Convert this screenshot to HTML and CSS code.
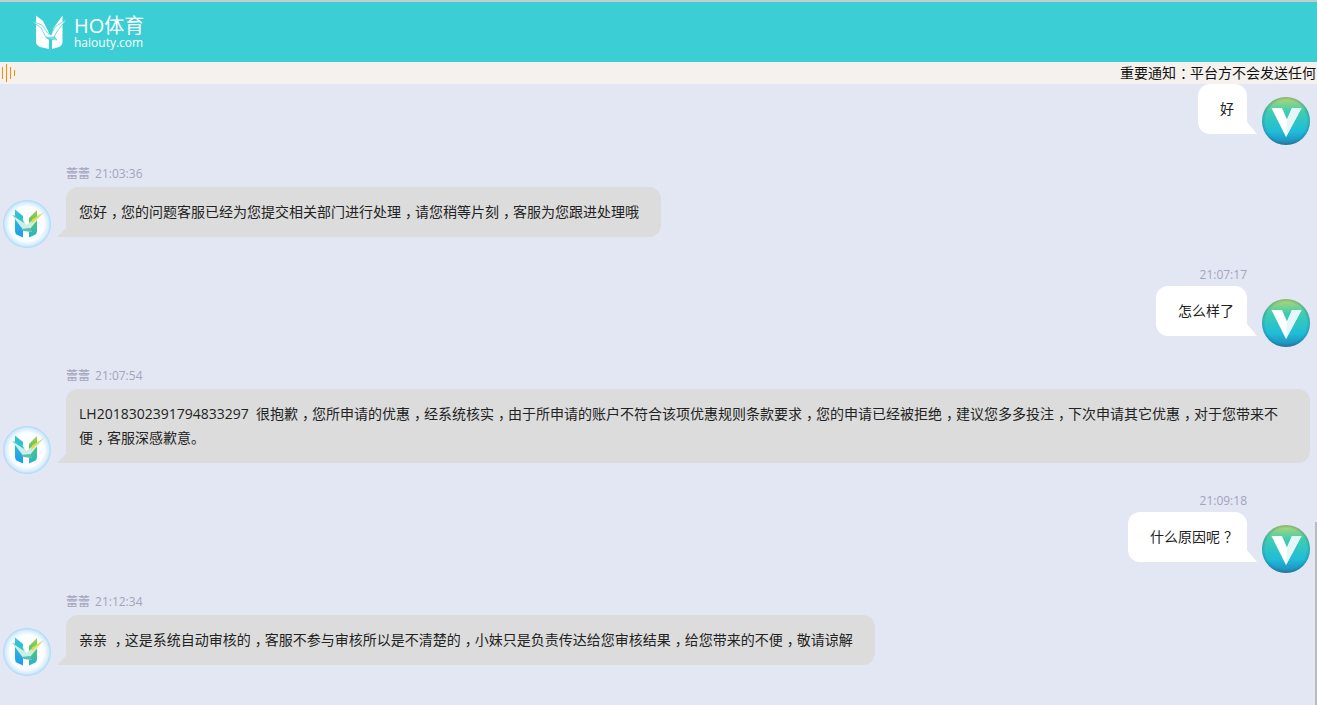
FILE: index.html
```html
<!DOCTYPE html>
<html lang="zh-CN">
<head>
<meta charset="utf-8">
<title>HO体育</title>
<link rel="stylesheet" href="styles.css">
</head>
<body>
<svg class="defs" width="0" height="0" aria-hidden="true">
  <defs>
    <linearGradient id="userFill" x1="0" y1="0" x2="0" y2="1">
      <stop offset="0" stop-color="#b9d86c"/>
      <stop offset=".3" stop-color="#3fcdb1"/>
      <stop offset=".72" stop-color="#20bcd8"/>
      <stop offset=".9" stop-color="#1e9ac6"/>
      <stop offset="1" stop-color="#2b7d9c"/>
    </linearGradient>
    <radialGradient id="userRim" cx=".5" cy=".5" r=".5">
      <stop offset=".86" stop-color="#1d5a78" stop-opacity="0"/>
      <stop offset="1" stop-color="#1d5a78" stop-opacity=".3"/>
    </radialGradient>
    <radialGradient id="orb" cx=".5" cy=".5" r=".5">
      <stop offset="0" stop-color="#fff"/>
      <stop offset=".72" stop-color="#fbfdff"/>
      <stop offset=".9" stop-color="#d6ecfb"/>
      <stop offset="1" stop-color="#a9d8f6"/>
    </radialGradient>
    <linearGradient id="mLeft" x1="0" y1="0" x2="0" y2="1">
      <stop offset="0" stop-color="#38c9d2"/>
      <stop offset="1" stop-color="#1c9bee"/>
    </linearGradient>
    <linearGradient id="mRight" x1="0" y1="1" x2="0" y2="0">
      <stop offset="0" stop-color="#27b4d0"/>
      <stop offset=".55" stop-color="#4fc27c"/>
      <stop offset="1" stop-color="#a8d23c"/>
    </linearGradient>
    <symbol id="avatarUser" viewBox="0 0 48 48">
      <circle cx="24" cy="24" r="24" fill="url(#userFill)"/>
      <circle cx="24" cy="24" r="24" fill="url(#userRim)"/>
      <path d="M9.500 11H20L25 22.500L30 11H39.500L24 40Z" fill="#fff"/>
      <path d="M25 22.500L30 11H39.500L24 40Z" fill="#e4f7f8"/>
    </symbol>
    <symbol id="avatarAgent" viewBox="0 0 48 48">
      <circle cx="24" cy="24" r="24" fill="url(#orb)"/>
      <path d="M35 38A17 17 0 0 0 43 26A21 21 0 0 1 35 38Z" fill="#f3e9b8"/>
      <path d="M12 9.500L20 16V37.500L14.500 35Q12 34 12 31Z" fill="url(#mLeft)"/>
      <path d="M34 10L26 18V37.500L31.500 35Q34 34 34 31Z" fill="url(#mRight)"/>
      <path d="M9 15L20 19L23.500 25L27 22L41 12L31 24L27 29L29 32L21 31L18 27Z" fill="#cdeee4"/>
      <path d="M9 15L19 18L21 23Z" fill="#2ac4cc"/>
      <path d="M41 12L29 19.500L28 24Z" fill="#e4da32"/>
      <path d="M18 29L27 28L29 32L21 31Z" fill="#58bfb4"/>
    </symbol>
  </defs>
</svg>

<header class="topbar">
  <div class="brand">
    <svg class="brand-mark" viewBox="0 0 35 36" aria-hidden="true">
      <path d="M4 1.500L11 7L17 19V35L8 33Q4 31 4 28Z" fill="#fff"/>
      <path d="M30.500 1.500L21.500 14L20 19V35L27 33Q30.500 31 30.500 28Z" fill="#fff"/>
      <path d="M0 7L10 11L15.500 19L19 21L23 13L35 5L26 16L22 23L25 26L16 25L13 21.500L9 14Z" fill="#fff" stroke="#3bced5" stroke-width=".7"/>
      <path d="M13 23L23 22.500L24 25L16 25.500Z" fill="#3bced5" opacity=".7"/>
      <path d="M17 26L20 26V36H17Z" fill="#3bced5"/>
    </svg>
    <div class="brand-text">
      <div class="brand-name">HO体育</div>
      <div class="brand-url">haiouty.com</div>
    </div>
  </div>
</header>

<div class="notice">
  <svg class="notice-icon" viewBox="0 0 16 18" aria-hidden="true">
    <path d="M2.500 3V15M6.500 0V18M10.500 3V15M14.500 6V12" stroke="#ff8a00" stroke-width="1" fill="none"/>
  </svg>
  <div class="notice-text">重要通知<span class="pn">：</span>平台方不会发送任何</div>
</div>

<main class="chat">
  <article class="msg msg-user msg-first">
    <div class="body"><div class="bubble">好</div></div>
    <svg class="avatar"><use href="#avatarUser"/></svg>
  </article>

  <article class="msg msg-agent">
    <svg class="avatar"><use href="#avatarAgent"/></svg>
    <div class="body">
      <div class="meta"><span>蕾蕾</span><span>21:03:36</span></div>
      <div class="bubble">您好<span class="pn">，</span>您的问题客服已经为您提交相关部门进行处理<span class="pn">，</span>请您稍等片刻<span class="pn">，</span>客服为您跟进处理哦</div>
    </div>
  </article>

  <article class="msg msg-user">
    <div class="body">
      <div class="meta"><span>21:07:17</span></div>
      <div class="bubble">怎么样了</div>
    </div>
    <svg class="avatar"><use href="#avatarUser"/></svg>
  </article>

  <article class="msg msg-agent">
    <svg class="avatar"><use href="#avatarAgent"/></svg>
    <div class="body">
      <div class="meta"><span>蕾蕾</span><span>21:07:54</span></div>
      <div class="bubble">LH2018302391794833297&nbsp;&nbsp;很抱歉<span class="pn">，</span>您所申请的优惠<span class="pn">，</span>经系统核实<span class="pn">，</span>由于所申请的账户不符合该项优惠规则条款要求<span class="pn">，</span>您的申请已经被拒绝<span class="pn">，</span>建议您多多投注<span class="pn">，</span>下次申请其它优惠<span class="pn">，</span>对于您带来不便<span class="pn">，</span>客服深感歉意。</div>
    </div>
  </article>

  <article class="msg msg-user">
    <div class="body">
      <div class="meta"><span>21:09:18</span></div>
      <div class="bubble">什么原因呢<span class="pn">？</span></div>
    </div>
    <svg class="avatar"><use href="#avatarUser"/></svg>
  </article>

  <article class="msg msg-agent">
    <svg class="avatar"><use href="#avatarAgent"/></svg>
    <div class="body">
      <div class="meta"><span>蕾蕾</span><span>21:12:34</span></div>
      <div class="bubble">亲亲 <span class="pn">，</span>这是系统自动审核的<span class="pn">，</span>客服不参与审核所以是不清楚的<span class="pn">，</span>小妹只是负责传达给您审核结果<span class="pn">，</span>给您带来的不便<span class="pn">，</span>敬请谅解</div>
    </div>
  </article>
</main>
<div class="scroll-thumb"></div>
</body>
</html>
```
FILE: styles.css
```css
* { box-sizing: border-box; }
html, body { margin: 0; height: 100%; }
body {
  width: 1317px;
  height: 705px;
  overflow: hidden;
  position: relative;
  display: flex;
  flex-direction: column;
  background: #e3e7f3;
  font-family: "Open Sans", "Noto Sans CJK SC", sans-serif;
  color: #222;
}
.defs { position: absolute; }

.topbar {
  height: 62px;
  flex: none;
  background: #3bced5;
  border-top: 2px solid #c6cccc;
  padding: 12px 0 0 32px;
}
.brand { display: flex; gap: 7px; }
.brand-mark { width: 35px; height: 36px; flex: none; }
.brand-text { color: #fff; }
.brand-name { font-size: 20px; line-height: 24px; }
.brand-url { font-size: 12px; line-height: 10px; }

.notice {
  height: 22px;
  flex: none;
  background: #f5f1ee;
  display: flex;
  align-items: center;
  overflow: hidden;
  position: relative;
}
.notice-icon { width: 16px; height: 18px; flex: none; }
.notice-text {
  margin-left: 1104px;
  font-size: 14px;
  line-height: 22px;
  white-space: nowrap;
  color: #111;
  flex: none;
}
/* full-width punctuation sits centred in its em box in the original face */
.pn { font-feature-settings: "halt"; padding: 0 3px 0 4px; }

.chat {
  flex: 1;
  min-height: 0;
  display: flex;
  flex-direction: column;
  gap: 20px;
  overflow: hidden;
  padding: 0 7px 0 3px;
}
.msg { display: flex; align-items: flex-end; flex: none; }
.msg-user { justify-content: flex-end; }
.avatar { width: 48px; height: 48px; flex: none; }
.body { display: flex; flex-direction: column; padding-bottom: 11px; min-width: 0; }
.msg-agent .body { margin-left: 15px; flex: 0 1 auto; }
.msg-user .body { margin-right: 15px; align-items: flex-end; }

.meta { display: flex; gap: 5px; font-size: 12px; color: #a3a3bd; }
.msg-agent .meta { height: 22px; line-height: 18px; }
.msg-user .meta { height: 18px; line-height: 14px; }

.bubble {
  position: relative;
  font-size: 14px;
  line-height: 24px;
  border-radius: 12px;
  padding: 13px 22px 13px 13px;
}
.msg-user .bubble { background: #fff; padding: 13px 13px 13px 22px; }
.msg-agent .bubble { background: #dcdcdc; }
.bubble::after {
  content: "";
  position: absolute;
  bottom: 0;
}
.msg-agent .bubble::after {
  left: -9px;
  width: 23px;
  height: 9px;
  background: #dcdcdc;
  clip-path: polygon(9px 0, 100% 0, 100% 100%, 0 100%);
}
.msg-user .bubble::after {
  right: -10px;
  width: 24px;
  height: 12px;
  background: #fff;
  clip-path: polygon(0 0, 14px 0, 100% 100%, 0 100%);
}
.scroll-thumb {
  position: absolute;
  right: 0;
  top: 522px;
  bottom: 0;
  width: 2px;
  background: #b9bcbf;
}
```
